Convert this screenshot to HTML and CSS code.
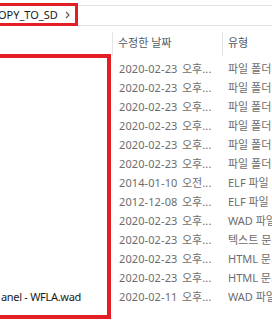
FILE: index.html
```html
<!DOCTYPE html>
<html lang="ko">
<head>
<meta charset="utf-8">
<link rel="stylesheet" href="styles.css">
</head>
<body>
<div class="page">
  <div class="addr">
    <div class="crumb"><span class="seg">OPY_TO_SD</span><svg class="chev" width="5" height="8" viewBox="0 0 5 8"><path d="M1 1 L4 4 L1 7" fill="none" stroke="#555" stroke-width="1.1"/></svg></div>
  </div>
  <div class="list">
    <div class="head">
      <div class="hcell"></div>
      <div class="hcell">수정한 날짜</div>
      <div class="hcell">유형</div>
    </div>
    <div class="rows">
      <div class="row"><div class="name"></div><div class="date">2020-02-23 오후...</div><div class="type">파일 폴더</div></div>
      <div class="row"><div class="name"></div><div class="date">2020-02-23 오후...</div><div class="type">파일 폴더</div></div>
      <div class="row"><div class="name"></div><div class="date">2020-02-23 오후...</div><div class="type">파일 폴더</div></div>
      <div class="row"><div class="name"></div><div class="date">2020-02-23 오후...</div><div class="type">파일 폴더</div></div>
      <div class="row"><div class="name"></div><div class="date">2020-02-23 오후...</div><div class="type">파일 폴더</div></div>
      <div class="row"><div class="name"></div><div class="date">2020-02-23 오후...</div><div class="type">파일 폴더</div></div>
      <div class="row"><div class="name"></div><div class="date">2014-01-10 오전...</div><div class="type">ELF 파일</div></div>
      <div class="row"><div class="name"></div><div class="date">2012-12-08 오후...</div><div class="type">ELF 파일</div></div>
      <div class="row"><div class="name"></div><div class="date">2020-02-23 오후...</div><div class="type">WAD 파일</div></div>
      <div class="row"><div class="name"></div><div class="date">2020-02-23 오후...</div><div class="type">텍스트 문서</div></div>
      <div class="row"><div class="name"></div><div class="date">2020-02-23 오후...</div><div class="type">HTML 문서</div></div>
      <div class="row"><div class="name"></div><div class="date">2020-02-23 오후...</div><div class="type">HTML 문서</div></div>
      <div class="row"><div class="name">anel - WFLA.wad</div><div class="date">2020-02-11 오후...</div><div class="type">WAD 파일</div></div>
    </div>
    <div class="mark"></div>
  </div>
</div>
</body>
</html>
```
FILE: styles.css
```css
html, body {
  margin: 0;
  padding: 0;
  background: #fff;
}
.page {
  width: 272px;
  height: 320px;
  overflow: hidden;
  font-family: "Noto Sans", "Noto Sans CJK KR", sans-serif;
  font-size: 11px;
  color: #1a1a1a;
}
.addr {
  margin-top: 5px;
  height: 19px;
  border-top: 1px solid #e3e3e3;
  border-bottom: 1px solid #e3e3e3;
  position: relative;
}
.crumb {
  position: absolute;
  left: 0;
  top: -3px;
  width: 75px;
  height: 17px;
  border: 3px solid #e31e25;
  border-left: none;
  display: flex;
  align-items: center;
  white-space: nowrap;
  color: #1a1a1a;
}
.seg {
  margin-left: -2px;
}
.chev {
  display: block;
  margin-left: 7px;
  flex: none;
}
.list {
  position: relative;
  margin-top: 6px;
}
.head {
  display: grid;
  grid-template-columns: 113px 110px 1fr;
  height: 24px;
}
.hcell {
  border-right: 1px solid #e5e5e5;
  padding-left: 5px;
  line-height: 22px;
  color: #4d5866;
  white-space: nowrap;
  overflow: hidden;
}
.hcell:last-child {
  border-right: none;
}
.rows {
  margin-top: 3px;
  display: flex;
  flex-direction: column;
}
.row {
  display: grid;
  grid-template-columns: 113px 110px 1fr;
  height: 19px;
  line-height: 19px;
  white-space: nowrap;
}
.name, .date, .type {
  overflow: hidden;
}
.name {
  padding-left: 1px;
  color: #1a1a1a;
  letter-spacing: -0.3px;
}
.date {
  padding-left: 6px;
  color: #6d6d6d;
  word-spacing: 1.5px;
  letter-spacing: 0.1px;
}
.type {
  padding-left: 5px;
  color: #6d6d6d;
}
.mark {
  position: absolute;
  left: -4px;
  top: 22px;
  width: 107px;
  height: 257px;
  border: 4px solid #e31e25;
  pointer-events: none;
}
```
